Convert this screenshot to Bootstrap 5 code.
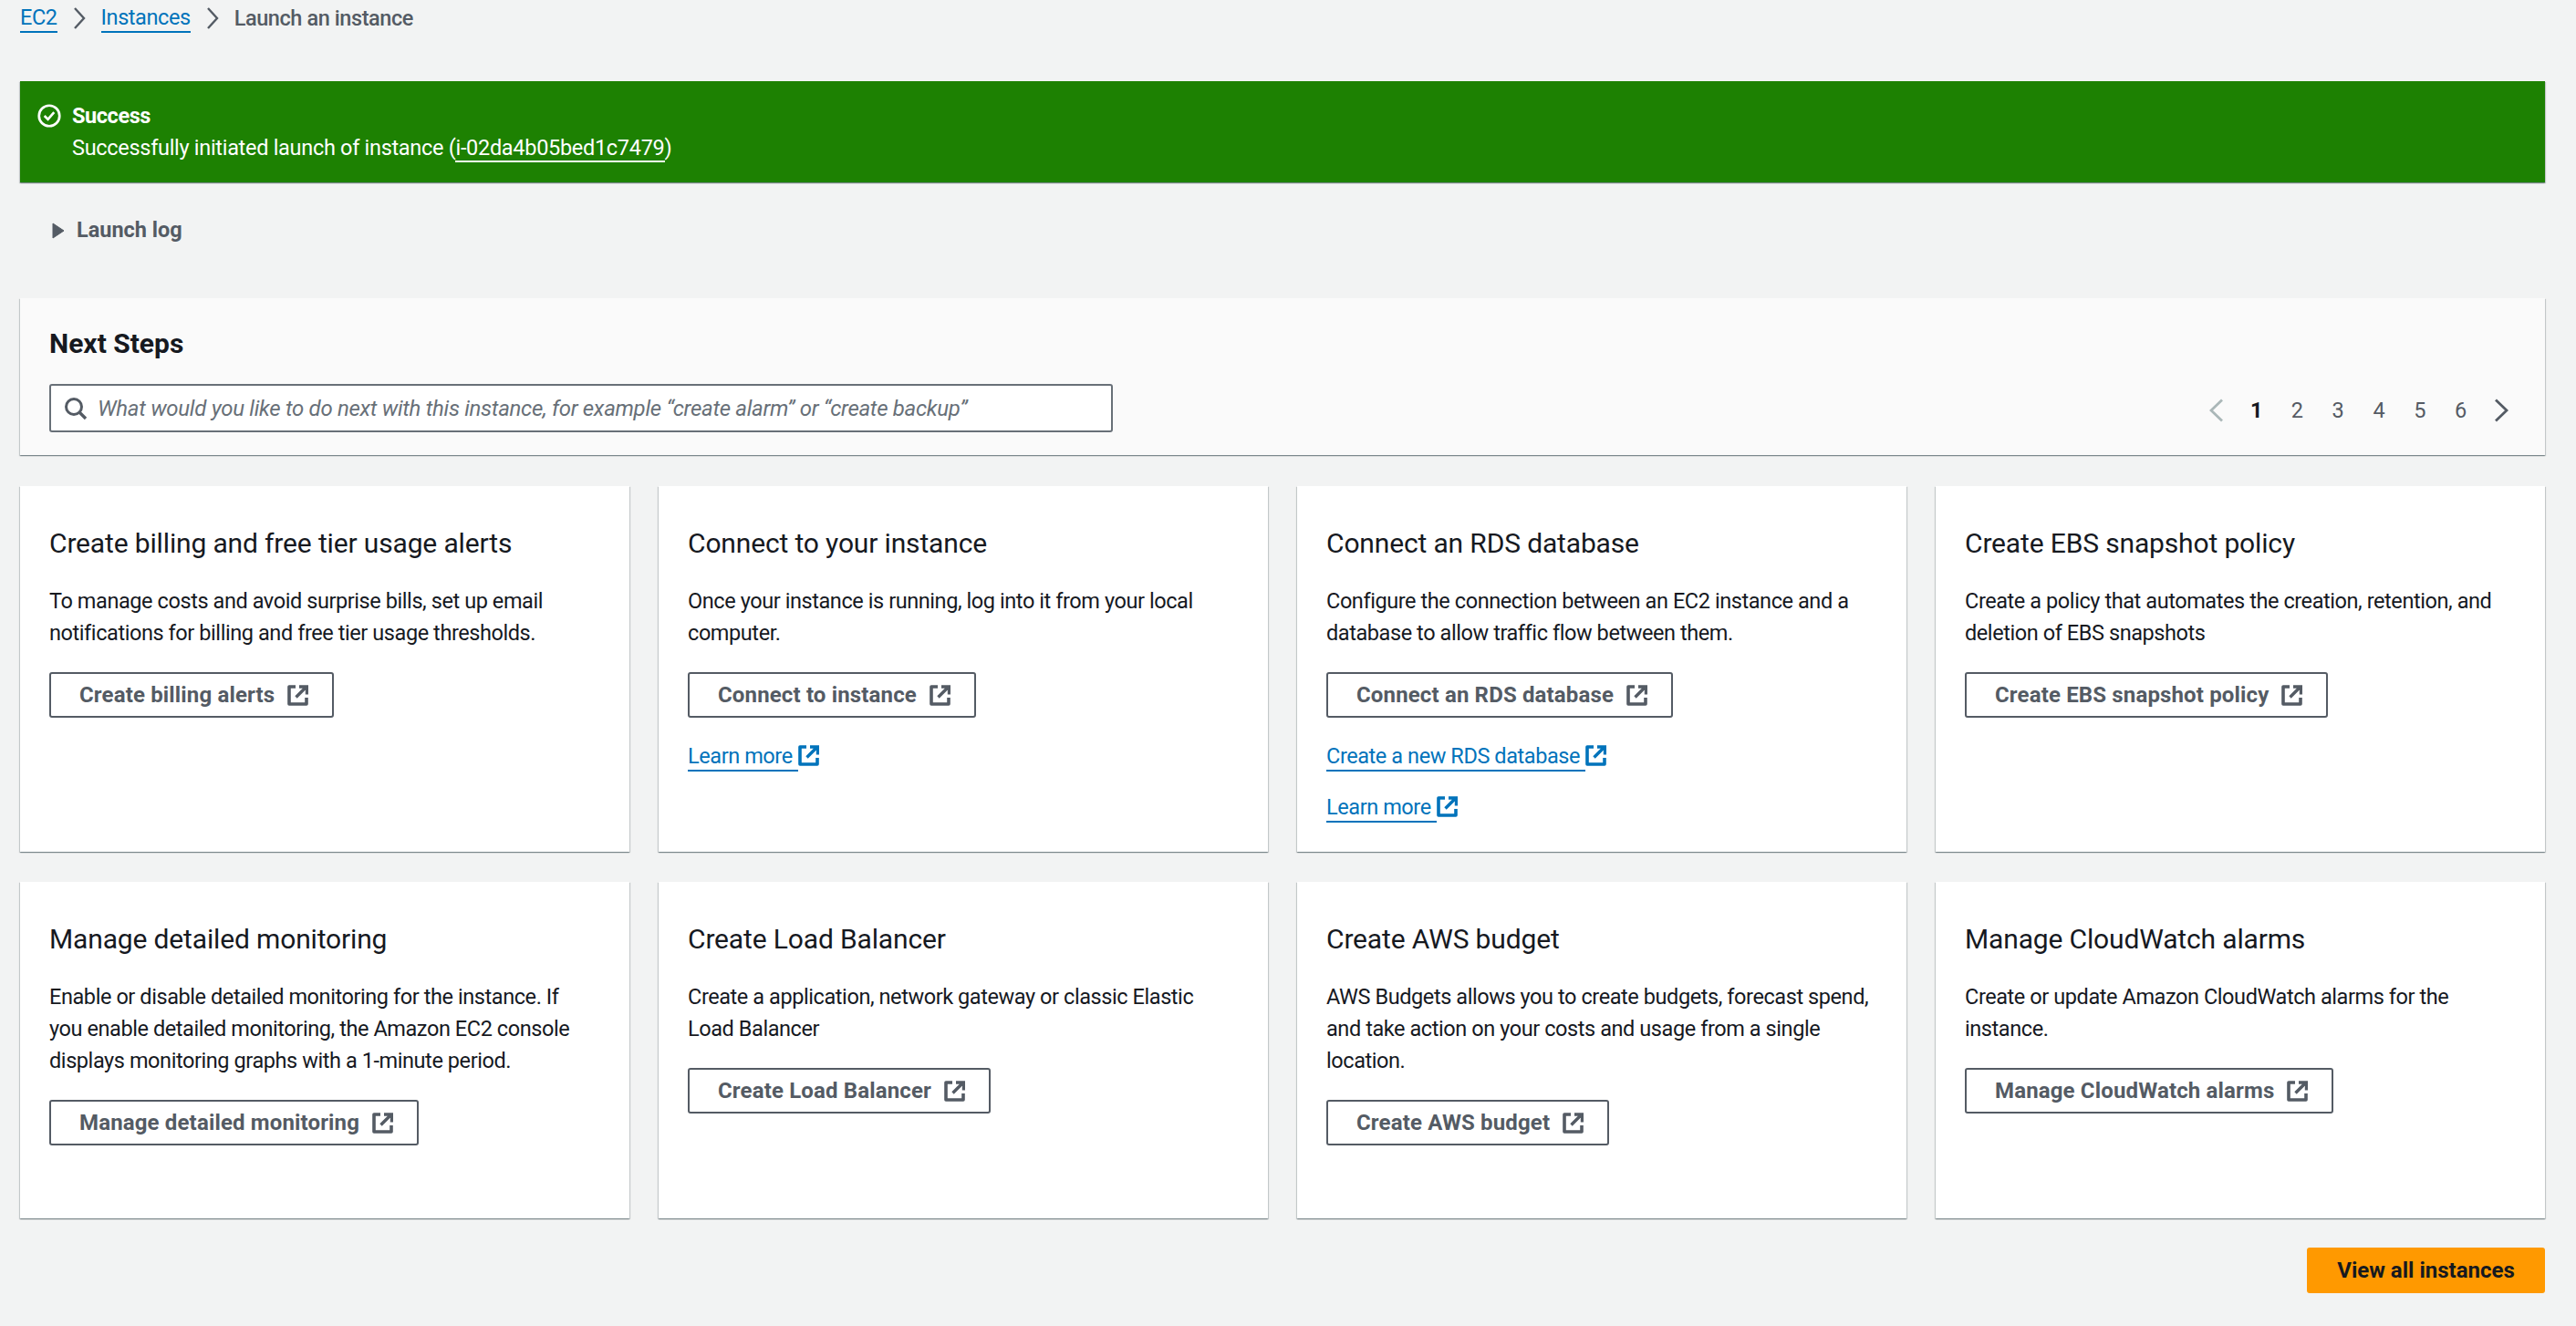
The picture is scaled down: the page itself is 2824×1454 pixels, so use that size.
<!DOCTYPE html>
<html lang="en">
<head>
    <meta charset="UTF-8">
    <title>Launch an instance</title>
    <link href="https://cdn.jsdelivr.net/npm/bootstrap@5.3.3/dist/css/bootstrap.min.css" rel="stylesheet">
    <style>
        body { background: #f2f3f3; color: #16191f; font-family: Roboto, "Liberation Sans", sans-serif; font-size: 23.5px; letter-spacing: -.42px; line-height: 35px; }
        a { color: #0073bb; text-decoration: none; }
        .page-wrap { padding: 0 34px 0 22px; }
        .crumbs { height: 40px; line-height: 40px; color: #545b64; }
        .crumbs a { border-bottom: 2px solid #0073bb; line-height: 30px; display: inline-block; }
        .crumbs .current { font-weight: 500; }
        .crumb-sep { margin: 0 17px 0 17px; }
        .flash-ok { margin-top: 49px; height: 111px; background: #1d8102; color: #fff; padding: 21px 30px 0 19px; box-shadow: 0 1px 1px 0 rgba(0,28,36,.3), 1px 1px 1px 0 rgba(0,28,36,.15), -1px 1px 1px 0 rgba(0,28,36,.15); }
        .flash-ok a { color: #fff; border-bottom: 2px solid #fff; }
        .flash-icon { margin: 4px 12px 0 0; }
        .flash-title { font-weight: 700; line-height: 35px; }
        .flash-text { line-height: 35px; letter-spacing: -.3px; }
        .log-toggle { margin: 35px 0 0 35px; height: 35px; color: #545b64; font-weight: 700; gap: 13px; letter-spacing: 0; }
        .steps-panel { margin-top: 57px; height: 172px; background: #fafafa; padding: 32px 32px 0; box-shadow: 0 1px 1px 0 rgba(0,28,36,.3), 1px 1px 1px 0 rgba(0,28,36,.15), -1px 1px 1px 0 rgba(0,28,36,.15); }
        .steps-title { font-size: 30px; font-weight: 700; line-height: 36px; margin: 0; letter-spacing: 0; }
        .steps-search { width: 1166px; height: 53px; margin-top: 26px; border: 2px solid #687078; border-radius: 3px; background: #fff; padding: 0 14px; gap: 11px; }
        .steps-search input { border: 0; outline: 0; width: 100%; font-style: italic; font-size: 24px; letter-spacing: -.3px; color: #545b64; background: transparent; padding: 2px 0 0; }
        .steps-search input::placeholder { color: #687078; opacity: 1; }
        .steps-pager { margin-top: 31px; padding-right: 8px; }
        .pager-left { margin-right: 13px; }
        .pager-right { margin-left: 14px; }
        .pager-item { width: 44.8px; text-align: center; color: #545b64; letter-spacing: 0; }
        .pager-item.is-on { color: #16191f; font-weight: 700; }
        .step-grid { --bs-gutter-x: 32px; --bs-gutter-y: 0; margin-top: 0; }
        .top-row { padding-top: 34px; }
        .low-row { padding-top: 33px; }
        .step-card { border: 0; border-radius: 0; padding: 45px 40px 0 32px; box-shadow: 0 1px 1px 0 rgba(0,28,36,.3), 1px 1px 1px 0 rgba(0,28,36,.15), -1px 1px 1px 0 rgba(0,28,36,.15); }
        .top-row .step-card { height: 401px; }
        .low-row .step-card { height: 369px; }
        .step-title { font-size: 30px; line-height: 36px; font-weight: 400; margin: 0 0 28px; letter-spacing: -.15px; }
        .step-text { margin: 0 0 25px; }
        .ext-btn { display: inline-flex; align-items: center; gap: 14px; height: 50px; padding: 0 26px 0 31px; border: 2px solid #545b64; border-radius: 3px; color: #545b64; font-size: 24px; font-weight: 700; letter-spacing: .15px; background: #fff; }
        .ext-link { display: block; margin-top: 28px; line-height: 28px; }
        .ext-link span { border-bottom: 2px solid #0073bb; padding-bottom: 1px; padding-right: 6px; }
        .ext-link svg { vertical-align: -3px; margin-left: 0; }
        .main-btn { width: 261px; height: 50px; margin-top: 32px; background: #f90; border: 0; border-radius: 3px; color: #16191f; font-weight: 700; font-size: 24px; letter-spacing: 0; }
    </style>
</head>
<body>
<svg width="0" height="0" class="position-absolute">
    <symbol id="ext-icon" viewBox="0 0 23 23"><path d="M9 2H2v19h19v-7" fill="none" stroke="currentColor" stroke-width="3.6" stroke-linejoin="round"/><path d="M9.500 13.500 20 3M13 2h8.500v8.500" fill="none" stroke="currentColor" stroke-width="3.4"/></symbol>
</svg>
<div class="page-wrap">
    <div class="crumbs d-flex align-items-center">
        <a href="#">EC2</a>
        <svg class="crumb-sep" width="14" height="24" viewBox="0 0 14 24"><path d="M2 1l10 11L2 23" fill="none" stroke="#545b64" stroke-width="2.4"/></svg>
        <a href="#">Instances</a>
        <svg class="crumb-sep" width="14" height="24" viewBox="0 0 14 24"><path d="M2 1l10 11L2 23" fill="none" stroke="#545b64" stroke-width="2.4"/></svg>
        <span class="current">Launch an instance</span>
    </div>

    <div class="flash-ok d-flex">
        <svg class="flash-icon flex-shrink-0" width="26" height="26" viewBox="0 0 27 27"><circle cx="13.500" cy="13.500" r="11.700" fill="none" stroke="#fff" stroke-width="2.8"/><path d="M8 13.500l4 4 7-8" fill="none" stroke="#fff" stroke-width="2.8"/></svg>
        <div>
            <div class="flash-title">Success</div>
            <div class="flash-text">Successfully initiated launch of instance (<a href="#">i-02da4b05bed1c7479</a>)</div>
        </div>
    </div>

    <div class="log-toggle d-flex align-items-center">
        <svg width="14" height="18" viewBox="0 0 14 18"><path d="M1 1l12 8-12 8z" fill="#545b64" stroke="#545b64"/></svg>
        <span>Launch log</span>
    </div>

    <div class="steps-panel">
        <h2 class="steps-title">Next Steps</h2>
        <div class="d-flex justify-content-between align-items-center">
            <div class="steps-search d-flex align-items-center">
                <svg class="flex-shrink-0" width="26" height="26" viewBox="0 0 26 26"><circle cx="11" cy="11" r="8.500" fill="none" stroke="#545b64" stroke-width="3"/><path d="M17 17l7 7" stroke="#545b64" stroke-width="3.400"/></svg>
                <input type="text" placeholder="What would you like to do next with this instance, for example “create alarm” or “create backup”">
            </div>
            <div class="steps-pager d-flex align-items-center">
                <svg class="pager-left" width="16" height="26" viewBox="0 0 16 26"><path d="M14 1.500 2 13l12 11.500" fill="none" stroke="#aab7b8" stroke-width="2.800"/></svg>
                <span class="pager-item is-on">1</span><span class="pager-item">2</span><span class="pager-item">3</span><span class="pager-item">4</span><span class="pager-item">5</span><span class="pager-item">6</span>
                <svg class="pager-right" width="16" height="26" viewBox="0 0 16 26"><path d="M2 1.500 14 13 2 24.500" fill="none" stroke="#545b64" stroke-width="2.800"/></svg>
            </div>
        </div>
    </div>

    <div class="row row-cols-4 step-grid top-row">
        <div class="col"><div class="card step-card">
            <h3 class="step-title">Create billing and free tier usage alerts</h3>
            <p class="step-text">To manage costs and avoid surprise bills, set up email notifications for billing and free tier usage thresholds.</p>
            <div><a class="ext-btn" href="#">Create billing alerts <svg width="23" height="23"><use href="#ext-icon"/></svg></a></div>
        </div></div>
        <div class="col"><div class="card step-card">
            <h3 class="step-title">Connect to your instance</h3>
            <p class="step-text">Once your instance is running, log into it from your local computer.</p>
            <div><a class="ext-btn" href="#">Connect to instance <svg width="23" height="23"><use href="#ext-icon"/></svg></a></div>
            <a class="ext-link" href="#"><span>Learn more</span><svg width="23" height="23"><use href="#ext-icon"/></svg></a>
        </div></div>
        <div class="col"><div class="card step-card">
            <h3 class="step-title">Connect an RDS database</h3>
            <p class="step-text">Configure the connection between an EC2 instance and a database to allow traffic flow between them.</p>
            <div><a class="ext-btn" href="#">Connect an RDS database <svg width="23" height="23"><use href="#ext-icon"/></svg></a></div>
            <a class="ext-link" href="#"><span>Create a new RDS database</span><svg width="23" height="23"><use href="#ext-icon"/></svg></a>
            <a class="ext-link" href="#"><span>Learn more</span><svg width="23" height="23"><use href="#ext-icon"/></svg></a>
        </div></div>
        <div class="col"><div class="card step-card">
            <h3 class="step-title">Create EBS snapshot policy</h3>
            <p class="step-text">Create a policy that automates the creation, retention, and deletion of EBS snapshots</p>
            <div><a class="ext-btn" href="#">Create EBS snapshot policy <svg width="23" height="23"><use href="#ext-icon"/></svg></a></div>
        </div></div>
    </div>

    <div class="row row-cols-4 step-grid low-row">
        <div class="col"><div class="card step-card">
            <h3 class="step-title">Manage detailed monitoring</h3>
            <p class="step-text">Enable or disable detailed monitoring for the instance. If you enable detailed monitoring, the Amazon EC2 console displays monitoring graphs with a 1-minute period.</p>
            <div><a class="ext-btn" href="#">Manage detailed monitoring <svg width="23" height="23"><use href="#ext-icon"/></svg></a></div>
        </div></div>
        <div class="col"><div class="card step-card">
            <h3 class="step-title">Create Load Balancer</h3>
            <p class="step-text">Create a application, network gateway or classic Elastic Load Balancer</p>
            <div><a class="ext-btn" href="#">Create Load Balancer <svg width="23" height="23"><use href="#ext-icon"/></svg></a></div>
        </div></div>
        <div class="col"><div class="card step-card">
            <h3 class="step-title">Create AWS budget</h3>
            <p class="step-text">AWS Budgets allows you to create budgets, forecast spend, and take action on your costs and usage from a single location.</p>
            <div><a class="ext-btn" href="#">Create AWS budget <svg width="23" height="23"><use href="#ext-icon"/></svg></a></div>
        </div></div>
        <div class="col"><div class="card step-card">
            <h3 class="step-title">Manage CloudWatch alarms</h3>
            <p class="step-text">Create or update Amazon CloudWatch alarms for the instance.</p>
            <div><a class="ext-btn" href="#">Manage CloudWatch alarms <svg width="23" height="23"><use href="#ext-icon"/></svg></a></div>
        </div></div>
    </div>

    <div class="d-flex justify-content-end">
        <button class="btn main-btn" type="button">View all instances</button>
    </div>
</div>
<script src="https://cdn.jsdelivr.net/npm/bootstrap@5.3.3/dist/js/bootstrap.bundle.min.js"></script>
</body>
</html>
